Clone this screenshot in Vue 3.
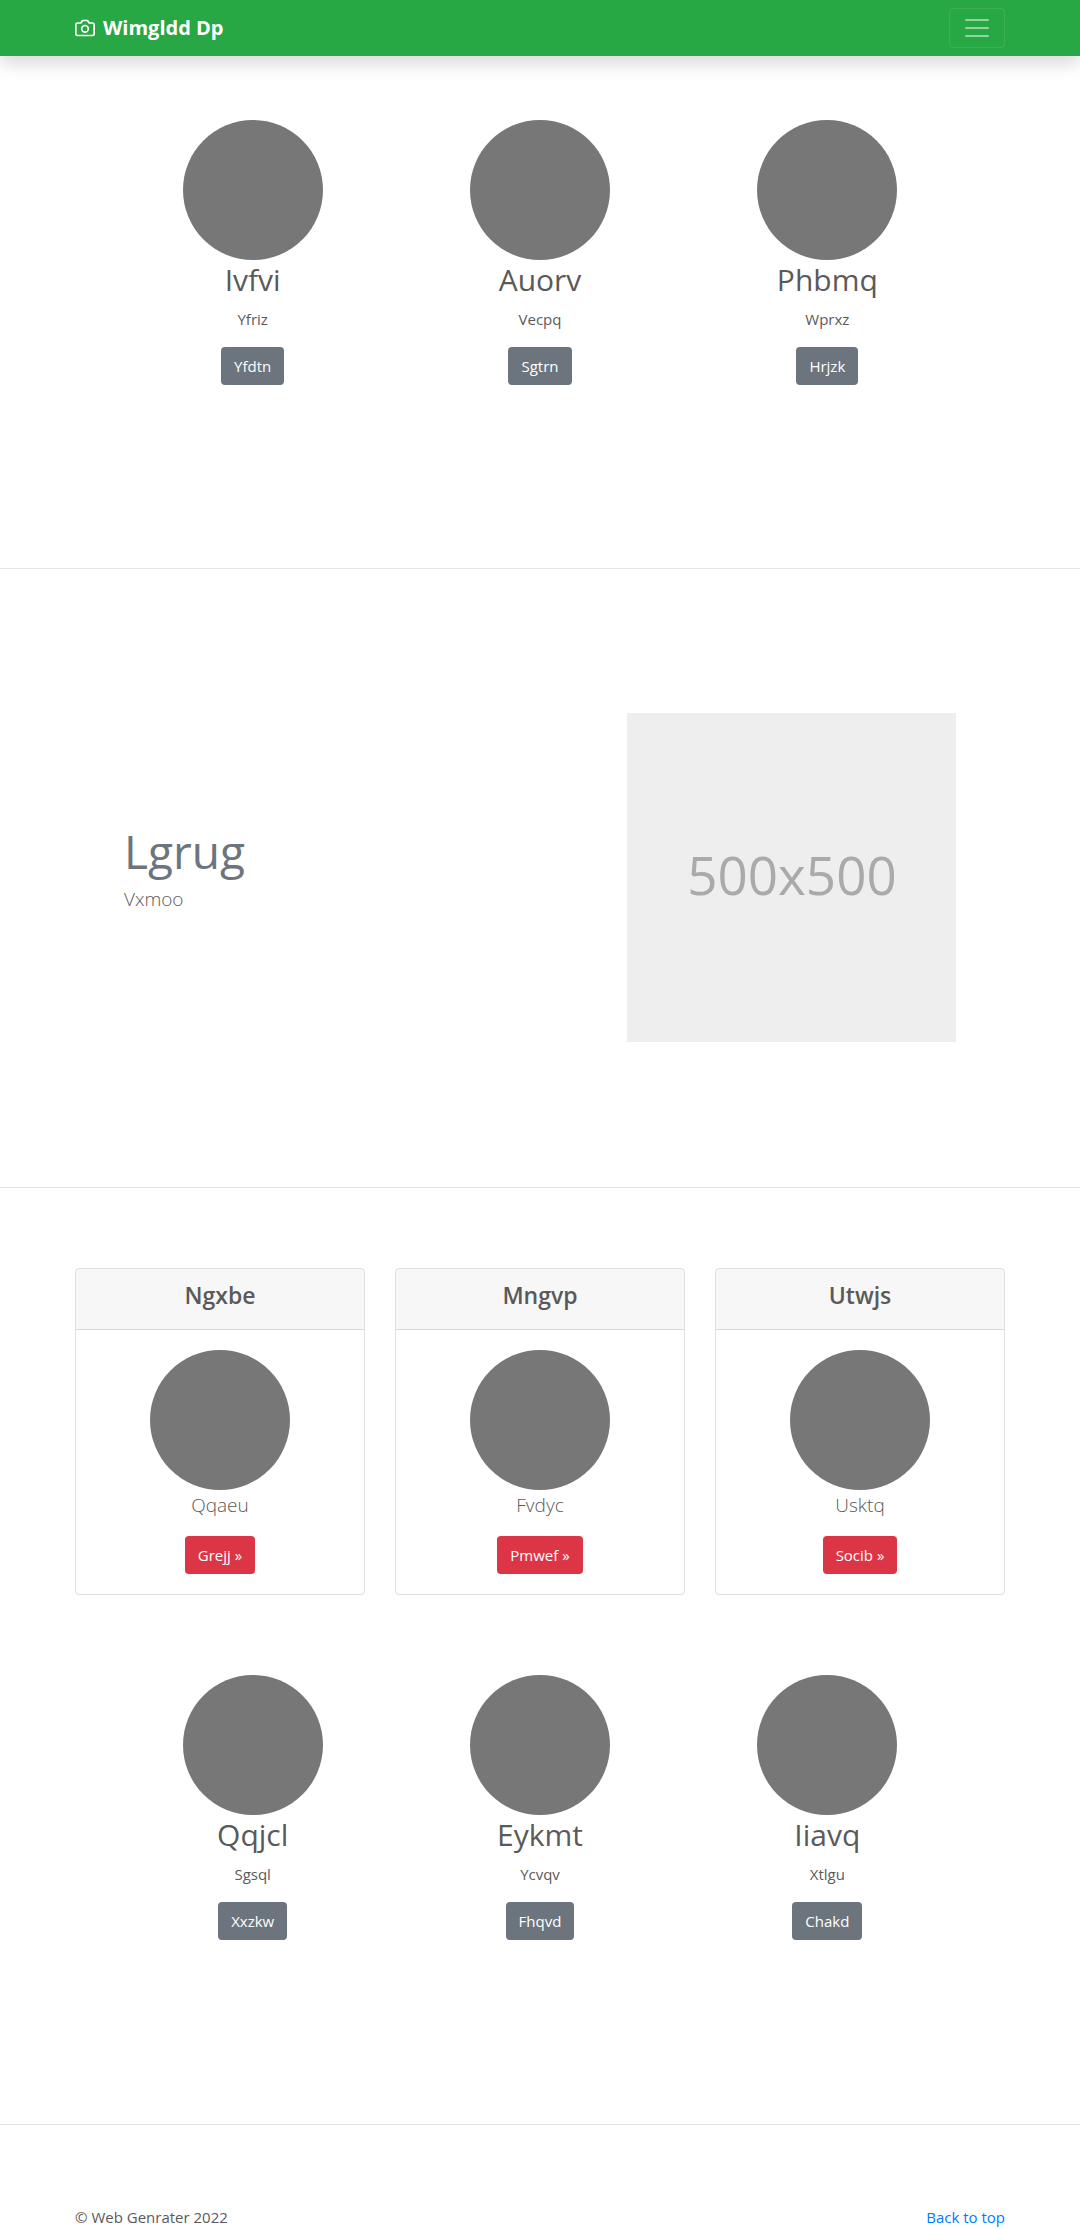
<script setup>
const topItems = [
  { title: 'Ivfvi', text: 'Yfriz', action: 'Yfdtn' },
  { title: 'Auorv', text: 'Vecpq', action: 'Sgtrn' },
  { title: 'Phbmq', text: 'Wprxz', action: 'Hrjzk' },
]
const cards = [
  { title: 'Ngxbe', text: 'Qqaeu', action: 'Grejj »' },
  { title: 'Mngvp', text: 'Fvdyc', action: 'Pmwef »' },
  { title: 'Utwjs', text: 'Usktq', action: 'Socib »' },
]
const bottomItems = [
  { title: 'Qqjcl', text: 'Sgsql', action: 'Xxzkw' },
  { title: 'Eykmt', text: 'Ycvqv', action: 'Fhqvd' },
  { title: 'Iiavq', text: 'Xtlgu', action: 'Chakd' },
]
</script>

<template>
  <div class="page">
    <header class="navbar">
      <div class="container navbar-inner">
        <a href="#" class="brand">
          <svg width="20" height="20" viewBox="0 0 24 24" fill="none" stroke="currentColor" stroke-width="2" stroke-linecap="round" stroke-linejoin="round" aria-hidden="true">
            <path d="M23 19a2 2 0 0 1-2 2H3a2 2 0 0 1-2-2V8a2 2 0 0 1 2-2h4l2-3h6l2 3h4a2 2 0 0 1 2 2z" />
            <circle cx="12" cy="13" r="4" />
          </svg>
          <strong>Wimgldd Dp</strong>
        </a>
        <button type="button" class="toggler" aria-label="Toggle navigation">
          <svg width="30" height="30" viewBox="0 0 30 30" fill="none" stroke="rgba(255,255,255,.5)" stroke-width="2" stroke-linecap="round" aria-hidden="true">
            <path d="M4 7h22M4 15h22M4 23h22" />
          </svg>
        </button>
      </div>
    </header>

    <main>
      <section class="container marketing">
        <div v-for="item in topItems" :key="item.title" class="column">
          <div class="avatar"></div>
          <h2>{{ item.title }}</h2>
          <p>{{ item.text }}</p>
          <a href="#" class="btn btn-secondary">{{ item.action }}</a>
        </div>
      </section>

      <hr />

      <section class="container featurette">
        <div class="featurette-text">
          <h2>Lgrug</h2>
          <p class="lead">Vxmoo</p>
        </div>
        <svg class="placeholder" viewBox="0 0 329 329" role="img" aria-label="500x500">
          <rect width="329" height="329" fill="#eee" />
          <text x="165" y="182" text-anchor="middle" fill="#aaa" font-size="53">500x500</text>
        </svg>
      </section>

      <hr />

      <section class="container cards">
        <article v-for="card in cards" :key="card.title" class="card">
          <h4>{{ card.title }}</h4>
          <div class="card-body">
            <div class="avatar"></div>
            <p class="lead">{{ card.text }}</p>
            <a href="#" class="btn btn-danger">{{ card.action }}</a>
          </div>
        </article>
      </section>

      <section class="container marketing marketing-last">
        <div v-for="item in bottomItems" :key="item.title" class="column">
          <div class="avatar"></div>
          <h2>{{ item.title }}</h2>
          <p>{{ item.text }}</p>
          <a href="#" class="btn btn-secondary">{{ item.action }}</a>
        </div>
      </section>

      <hr />
    </main>

    <footer class="container footer">
      <p>© Web Genrater 2022</p>
      <a href="#">Back to top</a>
    </footer>
  </div>
</template>

<style>
body {
  margin: 0;
  background: #fff;
}
</style>

<style scoped>
.page {
  font-family: "Segoe UI", "Open Sans", "Noto Sans", sans-serif;
  font-size: 15px;
  line-height: 24px;
  color: #5a5a5a;
}
.page *,
.page *::before {
  box-sizing: border-box;
}
h2,
h4,
p {
  margin: 0;
}
a {
  color: #007bff;
  text-decoration: none;
}
hr {
  margin: 0;
  border: 0;
  border-top: 1px solid rgba(0, 0, 0, 0.1);
}
.container {
  width: 100%;
  max-width: 960px;
  margin: 0 auto;
  padding: 0 15px;
}

.navbar {
  position: relative;
  padding: 8px 0;
  background: #28a745;
  box-shadow: 0 8px 16px rgba(0, 0, 0, 0.15);
}
.navbar-inner {
  display: flex;
  align-items: center;
  justify-content: space-between;
}
.brand {
  display: flex;
  align-items: center;
  gap: 8px;
  color: #fff;
  font-size: 20px;
}
.toggler {
  display: flex;
  padding: 4px 12px;
  border: 1px solid rgba(255, 255, 255, 0.1);
  border-radius: 4px;
  background: transparent;
}

.marketing {
  display: grid;
  grid-template-columns: repeat(3, 1fr);
  padding: 64px 49px 183px;
  text-align: center;
}
.marketing-last {
  padding-top: 80px;
  padding-bottom: 184px;
}
.column,
.card-body {
  display: flex;
  flex-direction: column;
  align-items: center;
}
.avatar {
  width: 140px;
  height: 140px;
  border-radius: 50%;
  background: #777;
}
.column h2 {
  margin-bottom: 8px;
  font-size: 30px;
  font-weight: 400;
  line-height: 39px;
}
.column p {
  margin-bottom: 16px;
}
.btn {
  padding: 6px 12px;
  border: 1px solid transparent;
  border-radius: 4px;
  color: #fff;
}
.btn-secondary {
  background-color: #6c757d;
}
.btn-danger {
  background-color: #dc3545;
}
.lead {
  font-size: 19px;
  font-weight: 300;
  line-height: 30px;
}

.featurette {
  display: flex;
  align-items: flex-start;
  justify-content: space-between;
  padding: 144px 64px 145px;
}
.featurette-text {
  padding-top: 112px;
}
.featurette-text h2 {
  margin-bottom: 7px;
  font-size: 46px;
  font-weight: 400;
  line-height: 52px;
  color: #6c757d;
}
.placeholder {
  display: block;
  flex: 0 1 329px;
}

.cards {
  display: grid;
  grid-template-columns: repeat(3, 1fr);
  gap: 30px;
  padding-top: 80px;
  text-align: center;
}
.card {
  border: 1px solid rgba(0, 0, 0, 0.125);
  border-radius: 4px;
  overflow: hidden;
}
.card h4 {
  padding: 12px 20px 20px;
  border-bottom: 1px solid rgba(0, 0, 0, 0.125);
  background: rgba(0, 0, 0, 0.03);
  font-size: 23px;
  font-weight: 600;
  line-height: 28px;
}
.card-body {
  padding: 20px;
}
.card-body .lead {
  margin-bottom: 16px;
}

.footer {
  display: flex;
  justify-content: space-between;
  padding-top: 80px;
}
</style>
